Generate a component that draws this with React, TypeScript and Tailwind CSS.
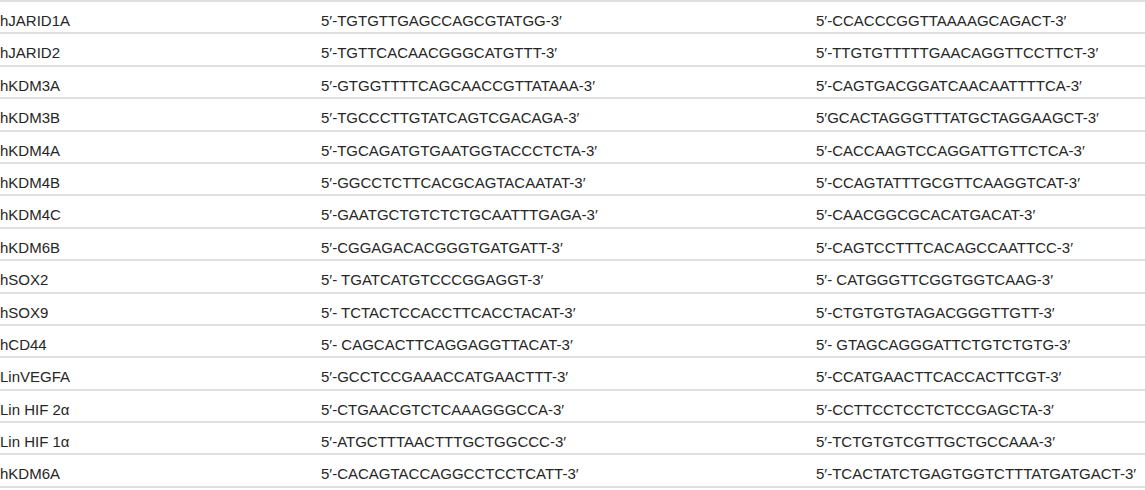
const rows: [string, string, string][] = [
  ["hJARID1A", "5′-TGTGTTGAGCCAGCGTATGG-3′", "5′-CCACCCGGTTAAAAGCAGACT-3′"],
  ["hJARID2", "5′-TGTTCACAACGGGCATGTTT-3′", "5′-TTGTGTTTTTGAACAGGTTCCTTCT-3′"],
  ["hKDM3A", "5′-GTGGTTTTCAGCAACCGTTATAAA-3′", "5′-CAGTGACGGATCAACAATTTTCA-3′"],
  ["hKDM3B", "5′-TGCCCTTGTATCAGTCGACAGA-3′", "5′GCACTAGGGTTTATGCTAGGAAGCT-3′"],
  ["hKDM4A", "5′-TGCAGATGTGAATGGTACCCTCTA-3′", "5′-CACCAAGTCCAGGATTGTTCTCA-3′"],
  ["hKDM4B", "5′-GGCCTCTTCACGCAGTACAATAT-3′", "5′-CCAGTATTTGCGTTCAAGGTCAT-3′"],
  ["hKDM4C", "5′-GAATGCTGTCTCTGCAATTTGAGA-3′", "5′-CAACGGCGCACATGACAT-3′"],
  ["hKDM6B", "5′-CGGAGACACGGGTGATGATT-3′", "5′-CAGTCCTTTCACAGCCAATTCC-3′"],
  ["hSOX2", "5′- TGATCATGTCCCGGAGGT-3′", "5′- CATGGGTTCGGTGGTCAAG-3′"],
  ["hSOX9", "5′- TCTACTCCACCTTCACCTACAT-3′", "5′-CTGTGTGTAGACGGGTTGTT-3′"],
  ["hCD44", "5′- CAGCACTTCAGGAGGTTACAT-3′", "5′- GTAGCAGGGATTCTGTCTGTG-3′"],
  ["LinVEGFA", "5′-GCCTCCGAAACCATGAACTTT-3′", "5′-CCATGAACTTCACCACTTCGT-3′"],
  ["Lin HIF 2α", "5′-CTGAACGTCTCAAAGGGCCA-3′", "5′-CCTTCCTCCTCTCCGAGCTA-3′"],
  ["Lin HIF 1α", "5′-ATGCTTTAACTTTGCTGGCCC-3′", "5′-TCTGTGTCGTTGCTGCCAAA-3′"],
  ["hKDM6A", "5′-CACAGTACCAGGCCTCCTCATT-3′", "5′-TCACTATCTGAGTGGTCTTTATGATGACT-3′"],
];

export default function App() {
  return (
    <div className="w-[1145px] h-[490px] bg-white font-['Liberation_Sans',Arial,sans-serif] text-[15px] text-[#262626]">
      <div className="border-b-2 border-[#e0e0e0]">
        {rows.map((r) => (
          <div
            key={r[0]}
            className="grid grid-cols-[321px_495px_1fr] h-[32.4px] border-t-2 border-[#e0e0e0] items-center pt-[8px]"
          >
            <span>{r[0]}</span>
            <span>{r[1]}</span>
            <span>{r[2]}</span>
          </div>
        ))}
      </div>
    </div>
  );
}
